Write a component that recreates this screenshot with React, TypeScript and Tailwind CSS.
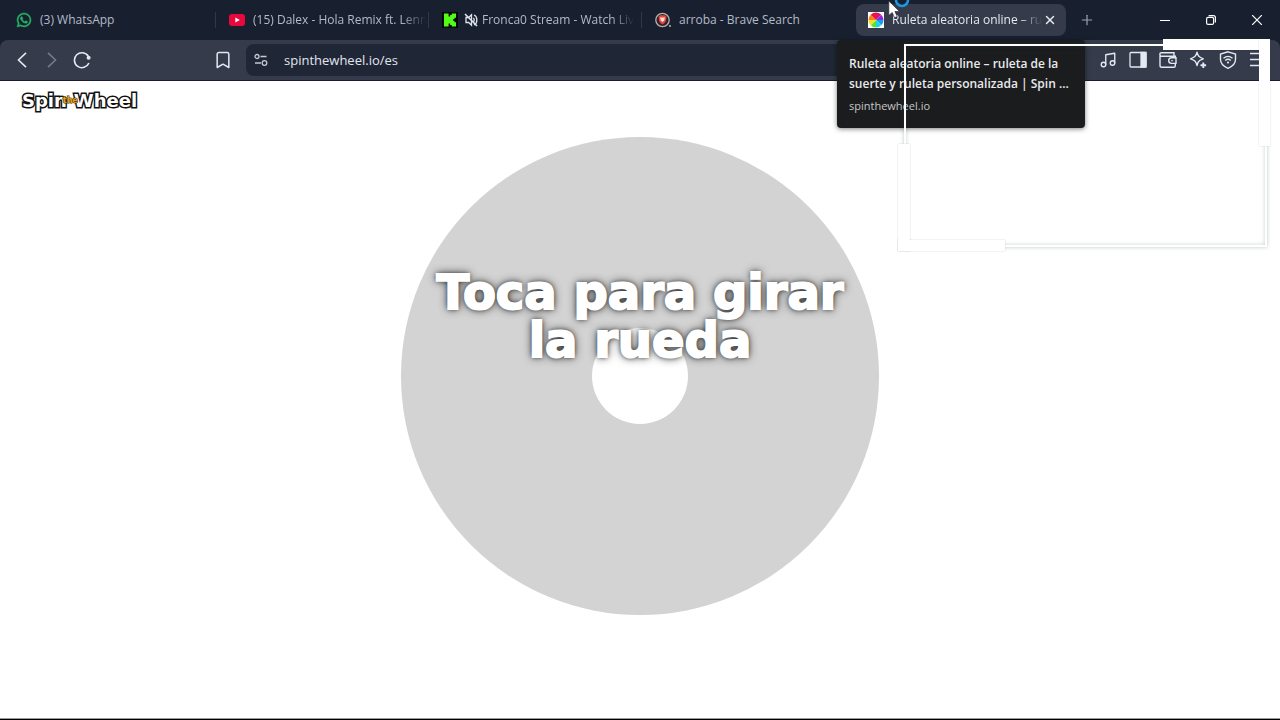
import type { ReactNode } from "react";
import { BookmarkIcon, Music, Plus, X } from "lucide-react";
import { FaWhatsapp } from "react-icons/fa";

type Tab = {
  title: string;
  icon: ReactNode;
  muted?: boolean;
  active?: boolean;
};

function YoutubeIcon() {
  return (
    <svg viewBox="0 0 16 16" className="size-4">
      <rect y="2" width="16" height="12" rx="3" fill="#e8083e" />
      <path d="M6.3 5.4v5.2L10.8 8z" fill="#fff" />
    </svg>
  );
}

function KickIcon() {
  return (
    <svg viewBox="0 0 16 16" className="size-4">
      <rect width="16" height="16" fill="#050807" />
      <path
        d="M2 1.5h4.6v3h1.5V3h1.6V1.5H14v4.3h-1.5v1.4H11v1.6h1.5v1.4H14v4.3H9.7V13H8.1v-1.5H6.6v3H2z"
        fill="#53fc18"
      />
    </svg>
  );
}

function BraveIcon() {
  return (
    <svg viewBox="0 0 16 16" className="size-4">
      <circle cx="7.5" cy="8" r="6.7" fill="#33202a" stroke="#b6afad" strokeWidth="1.3" />
      <path d="M3.5 4.6 5 3.2h5l1.5 1.4-.6 4.5-1.3 2-2.1 1.4-2.1-1.4-1.3-2z" fill="#e0483c" />
      <path d="M5 5.5h5l-.8 3L7.5 10 5.8 8.5z" fill="#ffd9d2" />
      <circle cx="15" cy="14" r="0.9" fill="#c9c6c8" />
    </svg>
  );
}

function WheelIcon() {
  return (
    <svg viewBox="0 0 16 16" className="size-4">
      <rect width="16" height="16" fill="#fff" />
      <path d="M8 8V.5A7.5 7.5 0 0 1 13.3 2.7z" fill="#d6156f" />
      <path d="M8 8l5.3-5.3A7.5 7.5 0 0 1 15.5 8z" fill="#8a2be0" />
      <path d="M8 8h7.5a7.5 7.5 0 0 1-2.2 5.3z" fill="#1c9cf0" />
      <path d="M8 8l5.3 5.3A7.5 7.5 0 0 1 8 15.5z" fill="#1bd6e0" />
      <path d="M8 8v7.5a7.5 7.5 0 0 1-5.3-2.2z" fill="#5be03a" />
      <path d="M8 8l-5.3 5.3A7.5 7.5 0 0 1 .5 8z" fill="#f4e21c" />
      <path d="M8 8H.5a7.5 7.5 0 0 1 2.2-5.3z" fill="#f7801e" />
      <path d="M8 8 2.7 2.7A7.5 7.5 0 0 1 8 .5z" fill="#ee1537" />
    </svg>
  );
}

function MutedIcon() {
  return (
    <svg viewBox="0 0 14 14" className="-mr-1 -ml-0.5 size-3.5 shrink-0" fill="none" stroke="#dfe3ea" strokeWidth="1.3">
      <path d="M7.5 1.8 4.7 4.5H2v5h2.7l2.8 2.7z" />
      <path d="M9.3 5c1.2 1 1.2 3 0 4M10 2c3.8 1.6 3.8 8.4 0 10" />
      <path d="M1 1l12 12" strokeWidth="1.6" />
    </svg>
  );
}

const tabs: Tab[] = [
  { title: "(3) WhatsApp", icon: <FaWhatsapp className="size-4 text-[#25b765]" strokeWidth={14} stroke="currentColor" /> },
  { title: "(15) Dalex - Hola Remix ft. Lenn", icon: <YoutubeIcon /> },
  { title: "Fronca0 Stream - Watch Liv", icon: <KickIcon />, muted: true },
  { title: "arroba - Brave Search", icon: <BraveIcon /> },
  { title: "Ruleta aleatoria online – ru", icon: <WheelIcon />, active: true },
];

function TabItem({ tab, divider }: { tab: Tab; divider: boolean }) {
  // only the titles that run up to the tab's edge fade out
  const fade = tab.title.length > 22;
  return (
    <>
      <div
        className={
          tab.active
            ? "flex h-8 w-[210px] min-w-0 items-center gap-2 rounded-lg bg-[#353b4a] px-3 text-[#e6e9ef]"
            : "flex h-8 w-[210px] min-w-0 items-center gap-2 pl-3 text-[#b4bac6]"
        }
      >
        <span className="shrink-0">{tab.icon}</span>
        {tab.muted && <MutedIcon />}
        <span
          className={
            fade
              ? "min-w-0 overflow-hidden whitespace-nowrap [mask-image:linear-gradient(to_right,#000_85%,transparent)]"
              : "min-w-0 whitespace-nowrap"
          }
        >
          {tab.title}
        </span>
        {tab.active && (
          <button type="button" aria-label="Cerrar pestaña" className="-mr-1 -ml-2 flex size-4 shrink-0 items-center justify-center">
            <X className="size-3.5" strokeWidth={2.5} />
          </button>
        )}
      </div>
      <div className={divider ? "mx-px h-4 w-px shrink-0 bg-[#30384a]" : "mx-px h-4 w-px shrink-0"} />
    </>
  );
}

function TabStrip() {
  return (
    <div className="flex h-10 items-center bg-[#182030] pl-1 text-xs">
      {tabs.map((tab, i) => (
        <TabItem key={tab.title} tab={tab} divider={i < 3} />
      ))}
      <button type="button" aria-label="Nueva pestaña" className="ml-0.5 flex size-8 items-center justify-center text-[#9aa2b1]">
        <Plus className="size-4" strokeWidth={1.8} />
      </button>
      <div className="ml-auto flex h-full shrink-0 text-white">
        <button type="button" aria-label="Minimizar" className="flex w-[46px] items-center justify-center">
          <span className="h-px w-2.5 bg-white" />
        </button>
        <button type="button" aria-label="Restaurar" className="flex w-[46px] items-center justify-center">
          <svg viewBox="0 0 10 10" className="size-2.5" fill="none" stroke="currentColor" strokeWidth="1.2">
            <rect x="0.6" y="2.4" width="7" height="7" rx="1.5" />
            <path d="M2.6.6h4.8a2 2 0 0 1 2 2v4.8" />
          </svg>
        </button>
        <button type="button" aria-label="Cerrar" className="flex w-[46px] items-center justify-center">
          <svg viewBox="0 0 10 10" className="size-2.5" stroke="currentColor" strokeWidth="1.2">
            <path d="M0 0l10 10M10 0 0 10" />
          </svg>
        </button>
      </div>
    </div>
  );
}

function ToolButton({ label, children }: { label: string; children: ReactNode }) {
  return (
    <button type="button" aria-label={label} className="flex h-8 w-[30px] shrink-0 items-center justify-center">
      {children}
    </button>
  );
}

function Toolbar() {
  return (
    <div className="bg-[#182030]">
      <div className="flex h-[41px] items-center rounded-t-lg border-b border-[#1b1c30] bg-[#353b4a] px-[7px] text-[#e3e8f1]">
        <ToolButton label="Atrás">
          <svg viewBox="0 0 10 16" className="h-4 w-2.5" fill="none" stroke="currentColor" strokeWidth="1.6">
            <path d="M9 .8 1.5 8 9 15.2" />
          </svg>
        </ToolButton>
        <ToolButton label="Adelante">
          <svg viewBox="0 0 10 16" className="h-4 w-2.5 text-[#737a89]" fill="none" stroke="currentColor" strokeWidth="1.6">
            <path d="M1 .8 8.5 8 1 15.2" />
          </svg>
        </ToolButton>
        <ToolButton label="Recargar">
          <svg viewBox="0 0 18 18" className="size-[18px]" fill="none" stroke="currentColor" strokeWidth="1.6">
            <path d="M15.3 5.2A7.5 7.5 0 1 0 15.9 12" />
            <circle cx="15.6" cy="6.8" r="2" fill="currentColor" stroke="none" />
          </svg>
        </ToolButton>
        <div className="w-[111px] shrink-0" />
        <ToolButton label="Marcadores">
          <BookmarkIcon className="size-5" strokeWidth={1.8} />
        </ToolButton>
        <label className="ml-2 flex h-8 min-w-0 flex-1 items-center gap-4 rounded-lg bg-[#1f2635] px-2">
          <svg viewBox="0 0 14 14" className="size-3.5 shrink-0" fill="none" stroke="#c5cad4" strokeWidth="1.3">
            <circle cx="3" cy="3.5" r="2" />
            <path d="M6.5 3.5h6M1 10h6" />
            <circle cx="10.5" cy="10" r="2.3" />
          </svg>
          <input
            type="text"
            aria-label="Dirección"
            defaultValue="spinthewheel.io/es"
            className="w-full min-w-0 bg-transparent pt-0.5 text-[13px] text-[#e1e5ed] outline-none"
          />
        </label>
        <div className="ml-3 flex shrink-0">
          <ToolButton label="Música">
            <Music className="size-[18px]" strokeWidth={1.8} />
          </ToolButton>
          <ToolButton label="Barra lateral">
            <svg viewBox="0 0 18 18" className="size-[18px]" fill="none" stroke="currentColor" strokeWidth="1.3">
              <rect x="1" y="1.5" width="16" height="14.5" rx="1" />
              <path d="M12 1.5h5V16h-5z" fill="currentColor" />
            </svg>
          </ToolButton>
          <ToolButton label="Cartera">
            <svg viewBox="0 0 18 18" className="size-[18px]" fill="none" stroke="currentColor" strokeWidth="1.4">
              <path d="M16.3 6.5V5.2H2.5a1.5 1.5 0 0 1 0-3.4H15v3.4M1 3.5v11a1.8 1.8 0 0 0 1.8 1.8h12a1.5 1.5 0 0 0 1.5-1.5v-2" />
              <path d="M17 6.8h-4.5a2.8 2.8 0 0 0 0 5.6H17z" />
              <path d="M12.3 9.6h1.5" />
            </svg>
          </ToolButton>
          <ToolButton label="Leo AI">
            <svg viewBox="0 0 18 18" className="size-[18px]" fill="none" stroke="currentColor" strokeWidth="1.4" strokeLinejoin="round">
              <path d="M8 1.2c.9 3.8 1.9 5 6.3 6.6-3 1-4.2 1.8-5 3-.5.9-.8 1.9-1.3 3.8C7.1 10.5 6 9.3 1.5 7.8 6 6.2 7.1 5 8 1.2z" />
              <path d="M14.3 11.5v5.6M11.5 14.3h5.6" strokeWidth="1.9" />
            </svg>
          </ToolButton>
          <ToolButton label="VPN">
            <svg viewBox="0 0 18 18" className="size-[18px]" fill="none" stroke="currentColor" strokeWidth="1.4">
              <path d="M9 .8 16.5 3v5.5c0 4-2.8 6.8-7.5 8.8-4.7-2-7.5-4.8-7.5-8.8V3z" />
              <path d="M4.5 7.3c2.7-2.3 6.3-2.3 9 0M6.2 9.5c1.7-1.4 3.9-1.4 5.6 0" />
              <circle cx="9" cy="11.5" r="1.1" fill="currentColor" stroke="none" />
            </svg>
          </ToolButton>
          <ToolButton label="Menú">
            <svg viewBox="0 0 18 18" className="size-[18px]" stroke="currentColor" strokeWidth="1.5">
              <path d="M1 2.5h16M1 8.5h16M1 14.5h16" />
            </svg>
          </ToolButton>
        </div>
      </div>
    </div>
  );
}

function TabTooltip() {
  return (
    <div className="absolute top-10 right-[195px] w-[248px] rounded-sm bg-[#1b1c1e] px-3 pt-3.5 pb-3 text-[#e9eaec] shadow-[0_1px_5px_rgba(0,0,0,0.5)]">
      <p className="text-xs leading-5 font-semibold whitespace-nowrap">
        Ruleta aleatoria online – ruleta de la
        <br />
        suerte y ruleta personalizada | Spin ...
      </p>
      <p className="mt-0.5 text-[11px] leading-5 text-[#c6c7c9]">spinthewheel.io</p>
    </div>
  );
}

// White capture frame with thick opposite corners
function CaptureFrame() {
  return (
    <div className="pointer-events-none absolute top-[39px] right-2.5 h-[212px] w-[372px]">
      <div className="absolute top-[5px] right-[3px] bottom-1 left-1.5 border-2 border-white shadow-[0_0_4px_rgba(40,80,70,0.3),inset_0_0_4px_rgba(40,80,70,0.25)]" />
      <div className="absolute top-0 right-0 h-[11px] w-[107px] bg-white" />
      <div className="absolute top-0 right-0 h-[107px] w-[11px] bg-white shadow-[0_0_1px_rgba(40,80,70,0.3)]" />
      <div className="absolute bottom-0 left-0 h-[107px] w-3 bg-white shadow-[0_0_1px_rgba(40,80,70,0.35)]" />
      <div className="absolute bottom-0 left-0 h-[11px] w-[107px] bg-white shadow-[0_0_1px_rgba(40,80,70,0.35)]" />
      <div className="absolute bottom-px left-px h-5 w-2.5 bg-white" />
    </div>
  );
}

function BusyCursor() {
  return (
    <svg viewBox="0 0 24 20" className="pointer-events-none absolute top-0 right-[368px] h-5 w-6">
      <circle cx="14" cy="0" r="6" fill="#17202f" stroke="#2196e3" strokeWidth="2.5" />
      <path d="M.8 1v14.5l3.4-3 2.4 5.2 2.6-1.2L6.9 11.5h4.6z" fill="#fff" stroke="#1c1c24" strokeWidth="0.6" />
    </svg>
  );
}

function Logo() {
  return (
    <a
      href="/es"
      className="flex w-fit items-center font-['DejaVu_Sans',sans-serif] text-lg leading-5 font-bold text-white [-webkit-text-stroke:3px_#111] [paint-order:stroke_fill]"
    >
      <span>Spin</span>
      <span className="z-10 -mx-1 text-[8px] text-[#e8a010] [-webkit-text-stroke:1px_#3a2605]">the</span>
      <span>Wheel</span>
    </a>
  );
}

export default function App() {
  return (
    <div className="relative flex min-h-screen flex-col overflow-hidden border-b border-black bg-white font-['Open_Sans','Noto_Sans',sans-serif]">
      <header>
        <TabStrip />
        <Toolbar />
      </header>

      <main className="flex flex-1 flex-col border-b border-[#9a9a9a] px-[22px] pt-2.5">
        <Logo />
        <button
          type="button"
          className="mx-auto mt-[26px] grid size-[478px] place-items-center rounded-full bg-[#d3d3d3]"
        >
          <span className="col-start-1 row-start-1 size-24 rounded-full bg-white" />
          <span className="z-10 col-start-1 row-start-1 mb-[120px] font-['DejaVu_Sans',sans-serif] text-5xl leading-12 font-bold whitespace-nowrap text-white [-webkit-text-stroke:2px_#fff] [text-shadow:0_0_10px_#222,0_0_4px_#444]">
            Toca para girar
            <br />
            la rueda
          </span>
        </button>
      </main>

      <TabTooltip />
      <CaptureFrame />
      <BusyCursor />
    </div>
  );
}
